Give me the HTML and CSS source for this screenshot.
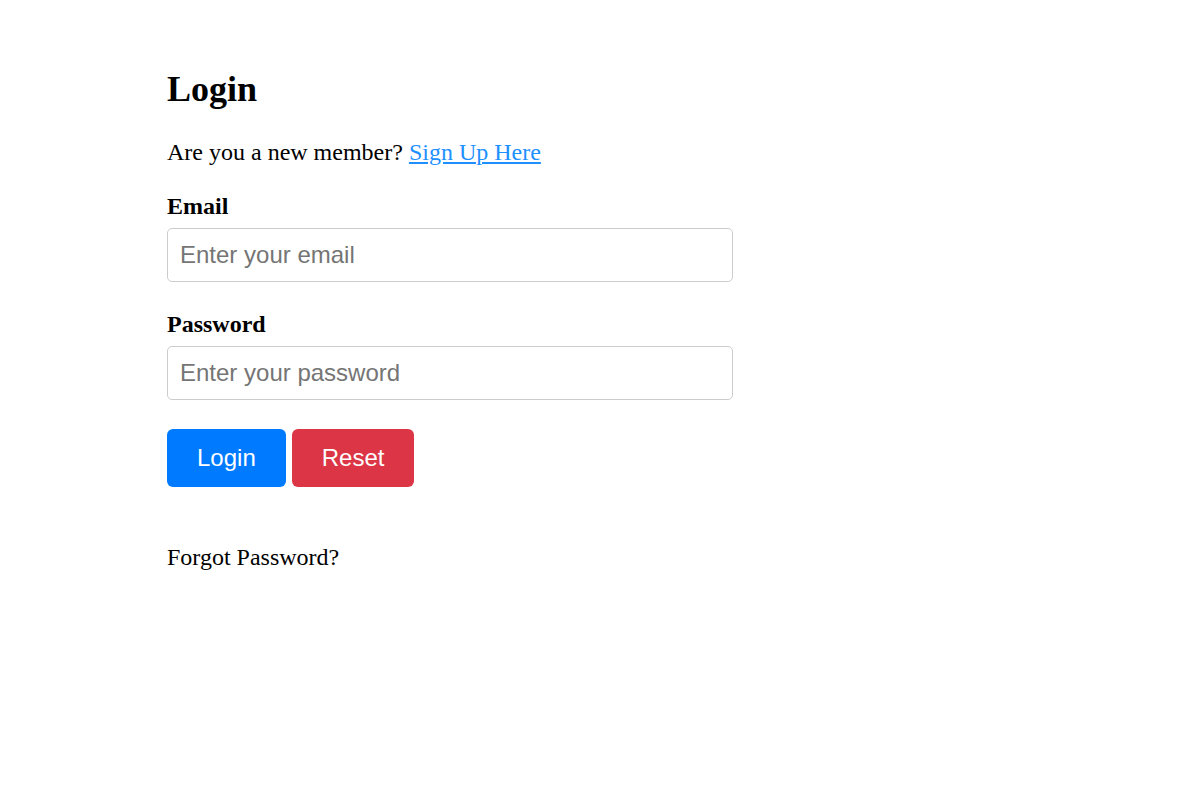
FILE: index.html
```html
<!DOCTYPE html>
<html>
<head>
<meta charset="utf-8">
<title>Login</title>
<link rel="stylesheet" href="styles.css">
</head>
<body>
<div class="container">
  <h2 class="title">Login</h2>
  <p class="intro">Are you a new member? <a href="#" class="link">Sign Up Here</a></p>
  <form class="form">
    <label class="label" for="email">Email</label>
    <input class="input" id="email" type="email" placeholder="Enter your email">
    <label class="label" for="password">Password</label>
    <input class="input" id="password" type="password" placeholder="Enter your password">
    <div class="actions">
      <button type="button" class="btn btn-primary">Login</button> <button type="reset" class="btn btn-danger">Reset</button>
    </div>
  </form>
  <p class="forgot">Forgot Password?</p>
</div>
</body>
</html>
```

FILE: styles.css
```css
body {
  margin: 0;
  font-family: "Liberation Serif", "Times New Roman", serif;
  font-size: 24px;
  color: #000;
  background: #fff;
}
.container {
  width: 566px;
  margin-left: 167px;
  padding-top: 38px;
}
.title {
  font-size: 36px;
  font-weight: bold;
  margin: 30px 0 29px;
}
.intro {
  margin: 0 0 27px;
}
.link {
  color: #1e90ff;
  text-decoration: underline;
}
.form {
  display: block;
}
.label {
  display: block;
  font-weight: bold;
  margin: 0 0 8px;
}
.input {
  display: block;
  box-sizing: border-box;
  width: 100%;
  height: 54px;
  padding: 0 12px;
  margin: 0 0 29px;
  border: 1px solid #ccc;
  border-radius: 5px;
  font-family: "Liberation Sans", Arial, sans-serif;
  font-size: 24px;
  color: #000;
  outline: none;
}
.input::placeholder {
  color: #757575;
}
.actions {
  display: block;
}
.btn {
  font-family: "Liberation Sans", Arial, sans-serif;
  font-size: 24px;
  color: #fff;
  border: none;
  border-radius: 6px;
  padding: 15px 30px;
  cursor: pointer;
  line-height: normal;
}
.btn-primary {
  background: #007bff;
}
.btn-danger {
  background: #dc3545;
}
.forgot {
  margin: 57px 0 0;
}
```
